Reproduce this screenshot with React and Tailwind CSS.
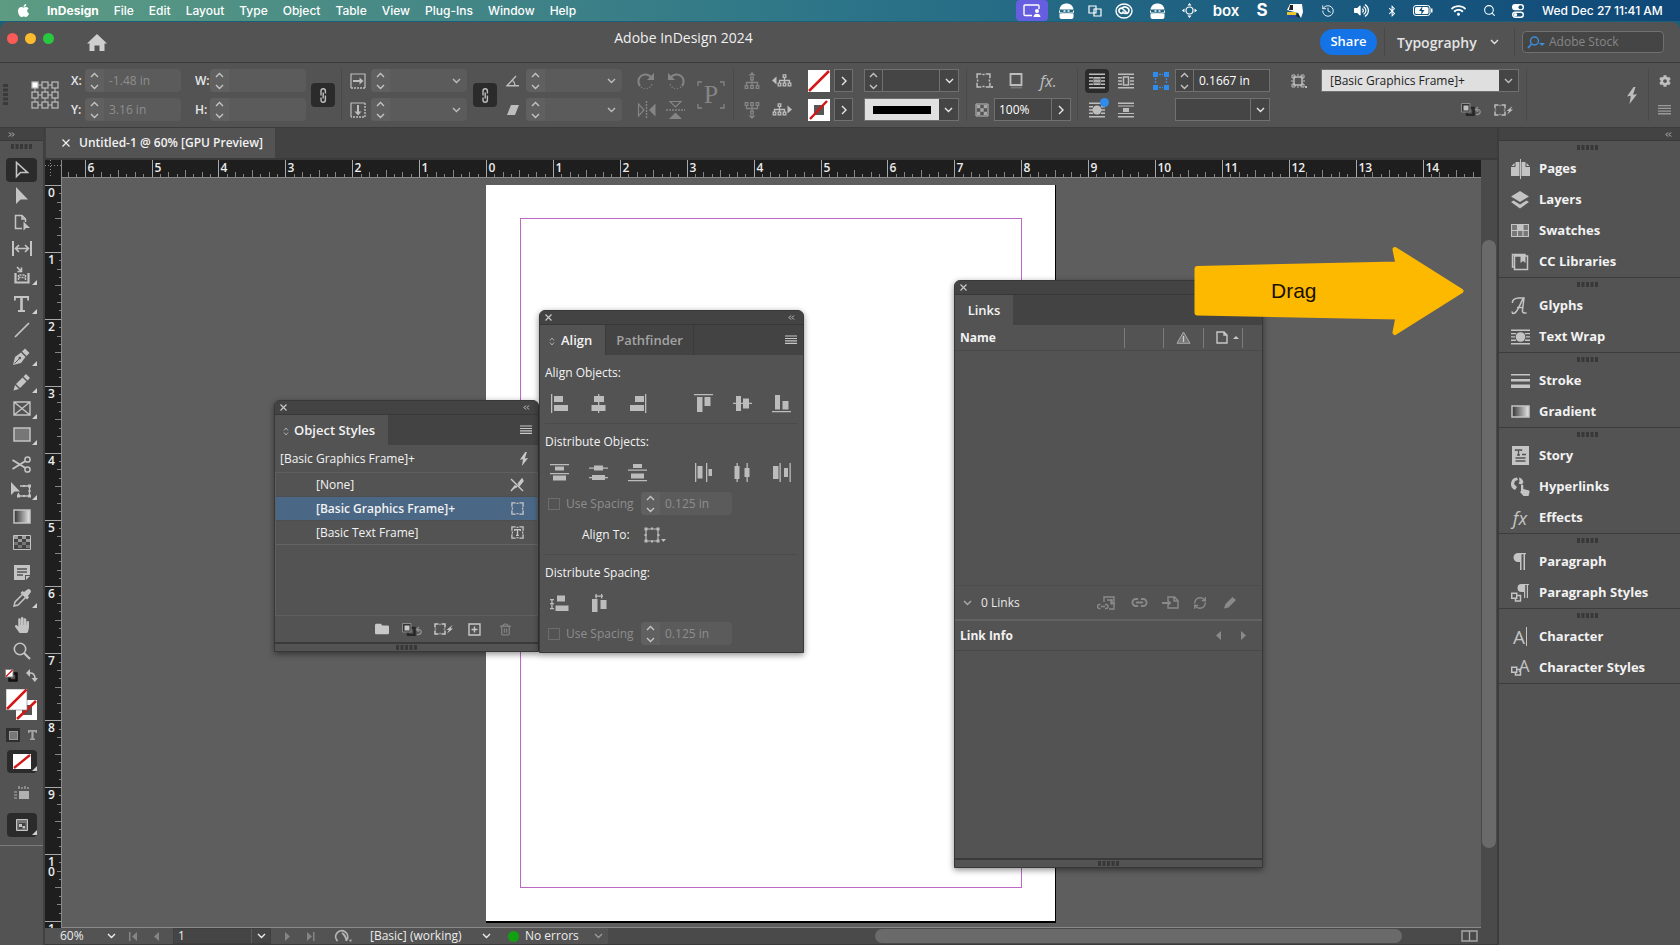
import React from "react";
import { FaApple, FaBluetoothB, FaWifi, FaFolder, FaCog, FaHandPaper, FaVolumeUp } from "react-icons/fa";
import { Search, Link2, RefreshCw, Trash2, History } from "lucide-react";

/* ---------- small drawing helpers ---------- */

function Svg({ w = 20, h = 20, box, className = "", children, stroke = false }) {
  return (
    <svg
      width={w}
      height={h}
      viewBox={box || `0 0 ${w} ${h}`}
      fill={stroke ? "none" : "currentColor"}
      stroke={stroke ? "currentColor" : "none"}
      strokeWidth={stroke ? 1.4 : 1}
      className={"shrink-0 " + className}
      aria-hidden="true"
    >
      {children}
    </svg>
  );
}

const Chevron = ({ className = "" }) => (
  <Svg w={9} h={6} stroke className={className}>
    <path d="M1 1l3.500 3.500L8 1" />
  </Svg>
);

const ChevronRight = () => (
  <Svg w={6} h={10} stroke>
    <path d="M1 1l4 4-4 4" />
  </Svg>
);

const Updown = () => (
  <Svg w={9} h={18} stroke className="text-[#c4c4c4]">
    <path d="M1 5l3.500-3.500L8 5M1 13l3.500 3.500L8 13" />
  </Svg>
);

const Hamburger = ({ className = "" }) => (
  <Svg w={13} h={10} className={className}>
    <path d="M0 0h13v1.300H0zM0 2.700h13v1.300H0zM0 5.400h13v1.300H0zM0 8.100h13v1.300H0z" />
  </Svg>
);

const Bolt = ({ w = 10, h = 17 }) => (
  <Svg w={w} h={h} box="0 0 10 17">
    <path d="M6.500 0L0 9.500l3.800-.8L2.500 17 10 7.200l-4 .6L8.500 0z" />
  </Svg>
);

const NoneSwatch = ({ hollow = false, size = 22 }) => (
  <Svg w={size} h={size} box="0 0 22 22">
    <rect width="22" height="22" fill="#fff" />
    {hollow && <rect x="6" y="6" width="10" height="10" fill="#555" />}
    {hollow ? (
      <path d="M2 20L19 2" stroke="#d01818" strokeWidth="2.500" />
    ) : (
      <path d="M1 21L21 1" stroke="#d01818" strokeWidth="2.500" />
    )}
  </Svg>
);

const Corner = () => (
  <svg width="5" height="5" viewBox="0 0 5 5" className="absolute right-0 bottom-0.5" aria-hidden="true">
    <path d="M5 0v5H0z" fill="#d0d0d0" />
  </svg>
);

const Grip = ({ className = "" }) => (
  <Svg w={21} h={5} className={"text-[#383838] " + className}>
    <path d="M0 0h3v5H0zM4.500 0h3v5h-3zM9 0h3v5H9zM13.500 0h3v5h-3zM18 0h3v5h-3z" />
  </Svg>
);

const DashedFrame = ({ w = 15, text = false }) => (
  <Svg w={w} h={w} box="0 0 14 14" stroke>
    <path d="M1 5V1h4M9 1h4v4M13 9v4H9M5 13H1V9M6 1.500h2M6 12.500h2M1.500 6v2M12.500 6v2" />
    {text && <path d="M4 5.500V4h6v1.500M7 4v6M5.500 10h3" />}
  </Svg>
);

const ClearOverrides = () => (
  <Svg w={21} h={13}>
    <path d="M9 5h3.500v7H6V9.500" fill="none" stroke="#262626" strokeWidth="2.500" />
    <path d="M0.500 0.500h8.500v8.500h-8.500z" fill="#333" stroke="#8a8a8a" />
    <rect x="2.500" y="2.500" width="5" height="5" />
    <path d="M15 11.500c5 .5 6-5 1-5h-1M17 4l-2.500 2.500L17 9" fill="none" stroke="#8f8f8f" strokeWidth="1.300" />
  </Svg>
);

const FrameBolt = () => (
  <Svg w={20} h={12}>
    <path d="M1 4.500V1h3.500M7.500 1H11v3.500M11 7.500V11H7.500M4.500 11H1V7.500M5.500 1.500h1M5.500 10.500h1M1.500 5.500v1M10.500 5.500v1" fill="none" stroke="currentColor" strokeWidth="1.500" />
    <path d="M18.500 2l-6 5h2.500l-2 3.500 6-5h-2.500z" />
  </Svg>
);

const ChainIcon = () => (
  <Svg w={8} h={17} stroke>
    <path d="M2 8.500V4a2.200 2.200 0 0 1 4.400 0v2.500M6.400 8.500V13A2.200 2.200 0 0 1 2 13v-2.500M4.200 5.500v6" />
  </Svg>
);

const Btn = ({ label, className = "", children }) => (
  <button type="button" aria-label={label} className={"flex shrink-0 items-center justify-center " + className}>
    {children}
  </button>
);

/* ---------- menu bar ---------- */

const MENUS = ["File", "Edit", "Layout", "Type", "Object", "Table", "View", "Plug-Ins", "Window", "Help"];

const Ghost = () => (
  <Svg w={15} h={16}>
    <path d="M0.500 6.500C1 2.500 4 0.500 7.500 0.500s6.500 2 7 6z" />
    <path d="M0.500 10.500h14v3.500a2 2 0 0 1-2 2h-10a2 2 0 0 1-2-2z" />
    <path d="M0.500 7.500v2c2 1 12 1 14 0v-2" fill="none" stroke="currentColor" />
    <path d="M4.500 8h2M8.500 8h2" stroke="currentColor" strokeWidth="1.500" />
  </Svg>
);

function StatusIcons() {
  const cell = "flex shrink-0 items-center justify-center ";
  return (
    <div className="flex items-center self-stretch">
      <Btn label="Screen sharing" className="h-full w-8 rounded bg-[#665ee0]">
        <Svg w={18} h={13} stroke>
          <path d="M9 11.500H2a1 1 0 0 1-1-1V2a1 1 0 0 1 1-1h13a1 1 0 0 1 1 1v3" />
          <circle cx="14" cy="7" r="2" fill="currentColor" stroke="none" />
          <path d="M10.500 13c0-4.500 7-4.500 7 0z" fill="currentColor" stroke="none" />
        </Svg>
      </Btn>
      <span className={cell + "w-9"}><Ghost /></span>
      <span className={cell + "w-[22px]"}>
        <Svg w={14} h={12} stroke><path d="M1 1h7v7H1zM6 4h7v7H6z" strokeWidth="1.200" /></Svg>
      </span>
      <span className={cell + "w-9"}>
        <Svg w={18} h={16} stroke>
          <ellipse cx="9" cy="8" rx="8" ry="7" />
          <path d="M11.500 9.500L8 6C5.500 3.800 2.800 6.800 4.500 9.200c1.200 1.600 3 1.300 4 .3M6.500 5.500c3-3.500 9-.5 7 3.500-1.500 2.500-4 1.500-5 .5L7.500 8.500" strokeWidth="1.600" />
        </Svg>
      </span>
      <span className={cell + "w-[30px]"}><Ghost /></span>
      <span className={cell + "w-[34px]"}>
        <Svg w={15} h={15}>
          <circle cx="7.500" cy="7.500" r="3.500" fill="none" stroke="currentColor" strokeWidth="1.200" />
          <path d="M7.500 0l2 2.500h-4zM7.500 15l2-2.500h-4zM0 7.500l2.500-2v4zM15 7.500l-2.500-2v4z" />
        </Svg>
      </span>
      <span className={cell + "w-10 text-[15px] leading-none font-semibold"}>box</span>
      <span className={cell + "w-8 text-[17px] leading-none font-bold"}>S</span>
      <span className={cell + "w-[34px]"}>
        <Svg w={16} h={14}>
          <path d="M0 6l3-6h12l1 8-2 6-3-5z" />
          <path d="M3 1h3v5H2z" fill="#222" />
          <path d="M11 9l2 5-4-2z" fill="#222" />
          <path d="M0 8h9v3H0z" fill="#e8c62c" />
          <path d="M1 11h8v3H1z" fill="#274a9a" />
        </Svg>
      </span>
      <span className={cell + "w-8"}><History size={14} strokeWidth={1.5} /></span>
      <span className={cell + "w-[34px]"}><FaVolumeUp size={15} /></span>
      <span className={cell + "w-7"}><FaBluetoothB size={12} /></span>
      <span className={cell + "w-[34px]"}>
        <Svg w={20} h={11}>
          <rect x="0.500" y="0.500" width="16.500" height="10" rx="2.500" fill="none" stroke="currentColor" />
          <rect x="2" y="2" width="13.500" height="7" rx="1.500" />
          <path d="M18 3.500h1.500v4H18z" />
          <path d="M9.500 1L6 6h2.500L8 10l3.500-5H9z" fill="#14507a" />
        </Svg>
      </span>
      <span className={cell + "w-9"}><FaWifi size={15} /></span>
      <span className={cell + "w-[26px]"}><Search size={13} strokeWidth={2} /></span>
      <span className={cell + "w-8"}>
        <Svg w={12} h={14}>
          <rect y="0" width="12" height="6.300" rx="3" />
          <rect x="0.700" y="8.300" width="10.600" height="5" rx="2.500" fill="none" stroke="currentColor" strokeWidth="1.400" />
          <circle cx="8.500" cy="3.150" r="2" fill="#14507a" />
          <circle cx="3.500" cy="10.800" r="1.700" />
        </Svg>
      </span>
      <span className="ml-2 w-[72px] whitespace-nowrap">Wed Dec 27</span>
      <span className="w-[66px] whitespace-nowrap">11:41 AM</span>
    </div>
  );
}

function MenuBar() {
  return (
    <header className="mb-px flex h-[21px] shrink-0 items-center justify-between bg-linear-to-r from-[#5d9c82] via-[#2c7488] to-[#0f4878] pl-4 font-['Inter',sans-serif] text-[12px] font-medium text-white">
      <nav className="flex items-center gap-[15px]">
        <a href="#apple" aria-label="Apple" className="w-4"><FaApple size={15} /></a>
        <a href="#app" className="font-bold">InDesign</a>
        {MENUS.map((m) => (
          <a key={m} href={"#" + m.toLowerCase()}>{m}</a>
        ))}
      </nav>
      <StatusIcons />
    </header>
  );
}

/* ---------- title bar ---------- */

function TitleBar() {
  return (
    <div className="relative flex h-[41px] shrink-0 items-center justify-between rounded-t-lg border-b border-[#3c3c3c] bg-[#535353] pr-4 pl-[7px]">
      <div className="flex items-center">
        <div className="mb-2 flex gap-[7px]">
          <Btn label="Close window" className="size-[11px] rounded-full bg-[#fc5b57]" />
          <Btn label="Minimize window" className="size-[11px] rounded-full bg-[#fdbb2e]" />
          <Btn label="Zoom window" className="size-[11px] rounded-full bg-[#28c840]" />
        </div>
        <Btn label="Home" className="ml-[33px] text-[#cfcfcf]">
          <Svg w={20} h={17}>
            <path d="M10 0L0 9.500h2.500V17h5v-5.500h5V17h5V9.500H20z" />
          </Svg>
        </Btn>
      </div>
      <h1 className="absolute inset-x-0 top-2 mx-auto w-fit pr-[313px] text-[14px] leading-4 text-[#f0f0f0]">Adobe InDesign 2024</h1>
      <div className="relative flex items-center">
        <button type="button" className="h-[26px] w-[57px] rounded-full bg-[#1473e6] text-[13px] font-semibold text-white">Share</button>
        <div className="ml-[7px] h-7 w-px bg-[#484848]" />
        <button type="button" className="ml-3 flex w-[102px] items-center justify-between text-[14px] font-semibold text-[#e4e4e4]">
          Typography <Chevron />
        </button>
        <div className="ml-[15px] h-7 w-px bg-[#484848]" />
        <label className="ml-[7px] flex h-[22px] w-[142px] items-center rounded-sm border border-[#707070] bg-[#454545] pl-1">
          <Svg w={18} h={13} className="text-[#3b8fe0]">
            <circle cx="7.500" cy="5" r="4" fill="none" stroke="currentColor" strokeWidth="1.400" />
            <path d="M4.500 8L1 12" stroke="currentColor" strokeWidth="1.600" />
            <path d="M12 7h6l-3 3z" />
          </Svg>
          <input aria-label="Adobe Stock" placeholder="Adobe Stock" className="ml-1 w-[100px] bg-transparent text-[12px] text-white outline-none placeholder:text-[#858585]" />
        </label>
      </div>
    </div>
  );
}

/* ---------- control bar ---------- */

const Sep = ({ className = "" }) => <div className={"h-[52px] w-px shrink-0 bg-[#494949] " + className} />;
const Pair = ({ className = "", children }) => <div className={"flex shrink-0 flex-col gap-[6px] " + className}>{children}</div>;

function SoftField({ label, value = "", width, drop = false }) {
  return (
    <div className={"flex h-[23px] items-center rounded-sm bg-[#5b5b5b] " + width}>
      <Btn label={label + " stepper"} className="h-full w-[19px] rounded-l-sm bg-[#606060]"><Updown /></Btn>
      <input aria-label={label} defaultValue={value} className="min-w-0 flex-1 bg-transparent pl-[5px] text-[12px] text-[#8e8e8e] outline-none" />
      {drop && <Btn label={label + " options"} className="w-[22px] text-[#bdbdbd]"><Chevron /></Btn>}
    </div>
  );
}

const edge = "h-[23px] border border-[#707070] bg-[#454545] text-[#e6e6e6] ";
const box = edge + "flex items-stretch ";

const Row = ({ className = "", children }) => <div className={"flex h-[23px] items-center " + className}>{children}</div>;

const WrapLines = ({ children, w = 16 }) => (
  <Svg w={w} h={16} box="0 0 16 16">
    <path d="M0 0.500h16v1.500H0zM0 4h4v1.400H0zM12 4h4v1.400h-4zM0 7.300h4v1.400H0zM12 7.300h4v1.400h-4zM0 10.600h4V12H0zM12 10.600h4V12h-4zM0 14h16v1.500H0z" />
    {children}
  </Svg>
);

const Tree = ({ dir }) => (
  <Svg w={16} h={18}>
    <g transform={dir === "down" ? "matrix(1 0 0 -1 0 18)" : undefined}>
      <path d="M8 0l3.500 3.500h-7z" />
      <path d="M8 8v5M2.500 13v-2.500h11V13" fill="none" stroke="currentColor" strokeWidth="1.300" />
      <path d="M6.700 5.200h2.600v2.600H6.700zM1.200 13.700h2.600v2.600H1.200zM6.700 13.700h2.600v2.600H6.700zM12.200 13.700h2.600v2.600h-2.600z" fill="none" stroke="currentColor" strokeWidth="1.300" />
    </g>
  </Svg>
);

const SideTree = ({ dir }) => (
  <Svg w={20} h={13}>
    <g transform={dir === "right" ? "matrix(-1 0 0 1 20 0)" : undefined}>
      <path d="M0 6.500L4.500 2.500v8z" />
      <path d="M12.500 4v5M7.500 9V6.500h10V9" fill="none" stroke="currentColor" strokeWidth="1.300" />
      <path d="M11.200 0.800h2.600v2.600h-2.600zM6.200 9.200h2.600v2.600H6.200zM11.200 9.200h2.600v2.600h-2.600zM16.200 9.200h2.600v2.600h-2.600z" fill="none" stroke="currentColor" strokeWidth="1.300" />
    </g>
  </Svg>
);

function ControlBar() {
  return (
    <div className="flex h-[65px] shrink-0 items-center border-b border-[#3c3c3c] bg-[#535353] text-[12px] text-[#bdbdbd]">
      <Svg w={5} h={22} className="ml-[3px] text-[#3a3a3a]">
        <path d="M0 0h5v3H0zM0 4.500h5v3H0zM0 9h5v3H0zM0 13.500h5v3H0zM0 18h5v3H0z" />
      </Svg>
      <Btn label="Reference point" className="ml-[23px]">
        <Svg w={28} h={28} stroke>
          <path d="M4 4h20v20H4zM14 4v20M4 14h20" strokeWidth="1" />
          {[1, 11, 21].map((y) => [1, 11, 21].map((x) => (
            <rect key={x + "-" + y} x={x} y={y} width="6" height="6" fill={x + y === 2 ? "#fff" : "#535353"} strokeWidth="1.200" />
          )))}
        </Svg>
      </Btn>
      <Pair className="ml-[12px] w-[112px]">
        <Row><span className="w-[14px] font-semibold text-[#e8e8e8]">X:</span><SoftField label="X" value="-1.48 in" width="w-[96px]" /></Row>
        <Row><span className="w-[14px] font-semibold text-[#e8e8e8]">Y:</span><SoftField label="Y" value="3.16 in" width="w-[96px]" /></Row>
      </Pair>
      <Pair className="ml-[12px] w-[111px]">
        <Row><span className="w-[15px] font-semibold text-[#e8e8e8]">W:</span><SoftField label="W" width="w-[96px]" /></Row>
        <Row><span className="w-[15px] font-semibold text-[#e8e8e8]">H:</span><SoftField label="H" width="w-[96px]" /></Row>
      </Pair>
      <Btn label="Constrain size" className="ml-[5px] h-6 w-[24px] rounded-sm bg-[#2b2b2b]"><ChainIcon /></Btn>
      <Sep className="ml-[6px]" />
      <Pair className="ml-[8px]">
        <Row className="w-[21px]">
          <Svg w={16} h={16} stroke><path d="M1 15V1h14v14" strokeWidth="1.200" /><path d="M1 15h14" strokeDasharray="2 1" /><path d="M3 8h8" strokeWidth="2" /><path d="M9.500 4.500L13.500 8l-4 3.500z" fill="currentColor" stroke="none" /></Svg>
        </Row>
        <Row className="w-[21px]">
          <Svg w={16} h={16} stroke><path d="M1 15V1h14" strokeWidth="1.200" /><path d="M15 1v14H1" strokeDasharray="2 1" /><path d="M8 3v8" strokeWidth="2" /><path d="M4.500 9.500L8 13.500l3.500-4z" fill="currentColor" stroke="none" /></Svg>
        </Row>
      </Pair>
      <Pair>
        <SoftField label="Scale X" width="w-[96px]" drop />
        <SoftField label="Scale Y" width="w-[96px]" drop />
      </Pair>
      <Btn label="Constrain scale" className="ml-[6px] h-6 w-[24px] rounded-sm bg-[#2b2b2b]"><ChainIcon /></Btn>
      <Pair className="ml-[9px]">
        <Row className="w-[20px]"><Svg w={14} h={12} stroke><path d="M13 10.800H1L10 1M6.500 5.500c1.500 1 2.500 3 2.500 5" /></Svg></Row>
        <Row className="w-[20px]"><Svg w={14} h={12}><path d="M5 1h8L9 11H1z" /></Svg></Row>
      </Pair>
      <Pair>
        <SoftField label="Rotation" width="w-[96px]" drop />
        <SoftField label="Shear" width="w-[96px]" drop />
      </Pair>
      <Pair className="ml-[15px] text-[#858585]">
        <Row className="gap-[10px]">
          <Btn label="Rotate clockwise">
            <Svg w={19} h={18} stroke><path d="M3 14A7 7 0 1 1 14 5" strokeWidth="2" /><path d="M17 1v7h-7z" fill="currentColor" stroke="none" /><path d="M4 15c4 3 9 2 11-3" strokeDasharray="1 2" /></Svg>
          </Btn>
          <Btn label="Rotate counterclockwise">
            <Svg w={19} h={18} stroke><path d="M16 14A7 7 0 1 0 5 5" strokeWidth="2" /><path d="M2 1v7h7z" fill="currentColor" stroke="none" /><path d="M15 15c-4 3-9 2-11-3" strokeDasharray="1 2" /></Svg>
          </Btn>
        </Row>
        <Row className="gap-[10px]">
          <Btn label="Flip horizontal">
            <Svg w={19} h={18} stroke><path d="M1.500 3v12L7 9z" strokeWidth="1.200" /><path d="M9.500 0v18" strokeDasharray="2 1" /><path d="M18.500 2.500v13L12 9z" fill="currentColor" stroke="none" /></Svg>
          </Btn>
          <Btn label="Flip vertical">
            <Svg w={19} h={20} stroke><path d="M4 1.500h11L9.500 7z" strokeWidth="1.200" /><path d="M0 10h19" strokeDasharray="2 1" /><path d="M3 19h13l-6.500-6.500z" fill="currentColor" stroke="none" /></Svg>
          </Btn>
        </Row>
      </Pair>
      <div className="relative ml-[12px] flex size-7 shrink-0 items-center justify-center font-['Liberation_Serif',serif] text-[26px] leading-none text-[#858585]">
        <svg className="absolute inset-0" width="28" height="28" fill="none" stroke="#858585" strokeWidth="1.300" aria-hidden="true"><path d="M1 5V1h4M23 1h4v4M27 23v4h-4M5 27H1v-4" /></svg>
        P
      </div>
      <Sep className="ml-[8px]" />
      <Pair className="ml-[10px]">
        <Row className="gap-[12px]"><span className="text-[#858585]"><Tree /></span><SideTree /></Row>
        <Row className="gap-[12px]"><span className="text-[#858585]"><Tree dir="down" /></span><SideTree dir="right" /></Row>
      </Pair>
      <Pair className="ml-[16px]">
        <Row className="gap-[4px]"><Btn label="Fill"><NoneSwatch /></Btn><Btn label="Fill options" className={edge + "w-[19px]"}><ChevronRight /></Btn></Row>
        <Row className="gap-[4px]"><Btn label="Stroke"><NoneSwatch hollow /></Btn><Btn label="Stroke options" className={edge + "w-[19px]"}><ChevronRight /></Btn></Row>
      </Pair>
      <Pair className="ml-[11px]">
        <div className={box + "w-[95px]"}>
          <Btn label="Weight stepper" className="w-[18px] border-r border-[#707070]"><Updown /></Btn>
          <input aria-label="Stroke weight" className="min-w-0 flex-1 bg-transparent px-1 outline-none" />
          <Btn label="Stroke weight options" className="w-[19px] border-l border-[#707070]"><Chevron /></Btn>
        </div>
        <div className={box + "w-[95px]"}>
          <Btn label="Stroke type" className="flex-1 bg-[#e0e0e0]"><span className="h-2 w-[58px] bg-black" /></Btn>
          <Btn label="Stroke type options" className="w-[19px]"><Chevron /></Btn>
        </div>
      </Pair>
      <Sep className="ml-[7px]" />
      <Pair className="ml-[8px]">
        <Row>
          <Btn label="Corner options" className="w-[19px]"><DashedFrame w={15} /><span className="mt-3 size-[2px] bg-current" /></Btn>
          <Btn label="Drop shadow" className="ml-[14px] w-[16px]"><Svg w={14} h={16} stroke><path d="M1.500 1h11v11h-11z" strokeWidth="1.800" /><path d="M2 14.500h11" stroke="#777" strokeWidth="2" /></Svg></Btn>
          <Btn label="Effects" className="ml-[16px] text-[16px] leading-4 italic">fx.</Btn>
        </Row>
        <Row>
          <Svg w={14} h={14} className="mr-[5px]"><path d="M1 1h12v12H1z" fill="none" stroke="currentColor" /><path d="M2 2h3.300v3.300H2zM8.700 2H12v3.300H8.700zM5.300 5.300h3.400v3.400H5.300zM2 8.700h3.300V12H2zM8.700 8.700H12V12H8.700z" opacity=".8" /></Svg>
          <div className={box + "w-[77px]"}>
            <input aria-label="Opacity" defaultValue="100%" className="min-w-0 flex-1 bg-transparent pl-[4px] text-white outline-none" />
            <Btn label="Opacity slider" className="w-[19px] border-l border-[#707070]"><ChevronRight /></Btn>
          </div>
        </Row>
      </Pair>
      <Sep className="ml-[6px]" />
      <Pair className="ml-[7px]">
        <Row className="gap-[9px]">
          <Btn label="No text wrap" className="h-[24px] w-[24px] rounded-sm bg-[#2b2b2b]"><WrapLines><path d="M5 4h6v1.400H5zM5 7.300h6v1.400H5zM5 10.600h6V12H5z" /><path d="M4 4h8v8H4z" opacity=".5" /></WrapLines></Btn>
          <Btn label="Wrap around bounding box"><WrapLines><path d="M5.500 4h5v8h-5z" fill="none" stroke="currentColor" strokeWidth="1.500" /></WrapLines></Btn>
        </Row>
        <Row className="gap-[9px]">
          <Btn label="Wrap around shape" className="relative h-[24px] w-[24px]"><WrapLines><circle cx="8" cy="8" r="4.500" /></WrapLines><span className="absolute top-0 right-0 size-[9px] rounded-full bg-[#2f8ceb]" /></Btn>
          <Btn label="Jump object"><Svg w={16} h={16}><path d="M0 0.500h16V2H0zM0 3.500h16V4.500H0zM5 6h6v4H5zM0 11h16v1H0zM0 14h16v1.500H0z" /></Svg></Btn>
        </Row>
      </Pair>
      <Pair className="ml-[19px]">
        <Row>
          <Svg w={16} h={18} className="mr-[6px] text-[#2f8ceb]"><path d="M0 0h5v5H0zM11 0h5v5h-5zM0 13h5v5H0zM11 13h5v5h-5z" /><path d="M2.500 6v6M13.500 6v6M6 2.500h4M6 15.500h4" stroke="currentColor" strokeDasharray="2 1" strokeWidth="1.300" /></Svg>
          <div className={box + "w-[95px]"}>
            <Btn label="Offset stepper" className="w-[18px] border-r border-[#707070]"><Updown /></Btn>
            <input aria-label="Wrap offset" defaultValue="0.1667 in" className="min-w-0 flex-1 bg-transparent pl-[5px] text-white outline-none" />
          </div>
        </Row>
        <Row className="pl-[22px]">
          <div className={box + "w-[95px]"}>
            <input aria-label="Wrap to" className="min-w-0 flex-1 bg-transparent outline-none" />
            <Btn label="Wrap to options" className="w-[19px] border-l border-[#707070]"><Chevron /></Btn>
          </div>
        </Row>
      </Pair>
      <Pair className="ml-[20px]">
        <Row>
          <Btn label="Frame fitting" className="w-[18px]"><Svg w={14} h={14} stroke><path d="M3 3h8v8H3z" strokeWidth="1.500" /><path d="M1 1h3v3H1zM10 1h3v3h-3zM1 10h3v3H1zM10 10h3v3h-3zM6 1h2M6 13h2M1 6v2M13 6v2" strokeWidth="1" /></Svg><span className="mt-3 size-[2px] bg-current" /></Btn>
          <div className="ml-[13px] flex h-[23px] w-[198px] items-stretch border border-[#707070] bg-[#454545]">
            <input aria-label="Object style" defaultValue="[Basic Graphics Frame]+" className="min-w-0 flex-1 bg-[#dfdfdf] pl-2 text-[12px] text-[#222] outline-none" />
            <Btn label="Object style options" className="w-[19px]"><Chevron /></Btn>
          </div>
        </Row>
        <Row className="justify-end gap-[12px] pr-[5px]">
          <Btn label="Clear overrides"><ClearOverrides /></Btn>
          <Btn label="Clear attributes"><FrameBolt /></Btn>
        </Row>
      </Pair>
      <Sep className="ml-[7px]" />
      <div className="flex-1" />
      <Btn label="Quick apply" className="mr-[11px]"><Bolt /></Btn>
      <Sep className="mr-[9px]" />
      <Pair className="mr-[9px] items-center">
        <Row><Btn label="Settings"><FaCog size={12} /></Btn></Row>
        <Row><Btn label="Control menu"><Hamburger className="text-[#9a9a9a]" /></Btn></Row>
      </Pair>
    </div>
  );
}

/* ---------- toolbox ---------- */

function GradientIcon({ w, h, id }) {
  return (
    <Svg w={w} h={h}>
      <defs>
        <linearGradient id={id}><stop offset="0" stopColor="#333" /><stop offset="1" stopColor="#e8e8e8" /></linearGradient>
      </defs>
      <rect x="1" y="1" width={w - 2} height={h - 2} fill={`url(#${id})`} stroke="currentColor" strokeWidth="1.500" />
    </Svg>
  );
}

const TOOLS = [
  {
    cls: "h-[129px]",
    items: [
      { n: "Selection", on: true, d: <Svg w={14} h={18} stroke><path d="M1.500 1.500v14l4-4h7z" strokeWidth="1.600" /></Svg> },
      { n: "Direct Selection", d: <Svg w={14} h={18}><path d="M1 0v17l4.500-4.500H13z" /></Svg> },
      { n: "Page", d: <Svg w={16} h={17} stroke><path d="M8 14.500H1.500v-13H8L11.500 5v3M8 1.500V5h3.500" strokeWidth="1.500" /><path d="M9.500 7.500v9l2.500-2.500h4z" fill="currentColor" stroke="none" /></Svg> },
      { n: "Gap", d: <Svg w={20} h={15} stroke><path d="M1 0v15M19 0v15" strokeWidth="2" /><path d="M4 7.500h12M7 4L3.500 7.500 7 11M13 4l3.500 3.500L13 11" strokeWidth="1.600" /></Svg> },
      { n: "Content Collector", fly: true, d: <Svg w={16} h={18} stroke><path d="M1.500 7v9.500h13V7" strokeWidth="2.200" /><path d="M4.500 14V9h7v5M4.500 11.500h7" strokeDasharray="2 1" /><path d="M3 1l4 4M7.500 1.500v4h-4" strokeWidth="1.600" /></Svg> },
    ],
  },
  {
    cls: "h-[155px] mt-[5px]",
    items: [
      { n: "Type", fly: true, d: <Svg w={15} h={16}><path d="M0 0h15v4.500h-1.800V2H8.800v12H11v2H4v-2h2.200V2H1.800v2.500H0z" /></Svg> },
      { n: "Line", d: <Svg w={16} h={16} stroke><path d="M1 15L15 1" strokeWidth="1.700" /></Svg> },
      { n: "Pen", fly: true, d: <Svg w={17} h={17}><path d="M0 17l2-8 6-4.500 4.500 4.500-4.500 6z" /><path d="M9 3.500L12 0.500 16.500 5 13.500 8z" /><path d="M1.500 15.500l5-5" stroke="#535353" /><circle cx="6.800" cy="10" r="1.300" fill="#535353" /></Svg> },
      { n: "Pencil", fly: true, d: <Svg w={17} h={17}><path d="M0.500 16.500L2 11l4 4zM3 10l6.500-6.500 4 4L7 14z" /><path d="M10.500 2.500L13 0l4 4-2.500 2.500z" /></Svg> },
      { n: "Rectangle Frame", fly: true, d: <Svg w={18} h={15} stroke><path d="M1 1h16v13H1zM1 1l16 13M17 1L1 14" /></Svg> },
      { n: "Rectangle", fly: true, d: <Svg w={18} h={15}><path d="M1 1h16v13H1z" fill="#777" stroke="currentColor" strokeWidth="1.500" /></Svg> },
    ],
  },
  {
    cls: "h-[103px] mt-[5px]",
    items: [
      { n: "Scissors", d: <Svg w={19} h={17} stroke><path d="M0.500 4L13.500 12M0.500 13L13.500 5" strokeWidth="2" /><circle cx="15.500" cy="3.500" r="2.600" strokeWidth="1.500" /><circle cx="15.500" cy="13.500" r="2.600" strokeWidth="1.500" /></Svg> },
      { n: "Free Transform", fly: true, d: <Svg w={21} h={17}><path d="M0 0v13l3.500-3.500H9z" /><path d="M9 4h9.500v10h-11v-3" fill="none" stroke="currentColor" strokeWidth="1.300" /><path d="M17 2.500h3v3h-3zM17 12.500h3v3h-3zM6 12.500h3v3H6zM12 3h2v2h-2zM12 13h2v2h-2zM17.500 8h2v2h-2z" /></Svg> },
      { n: "Gradient Swatch", d: <GradientIcon w={18} h={15} id="gs" /> },
      { n: "Gradient Feather", d: <Svg w={18} h={15}><path d="M0.500 0.500h17v14h-17z" fill="#444" stroke="currentColor" /><path d="M1 1h4v3H1zM9 1h4v3H9zM5 4h4v3H5zM13 4h4v3h-4z" opacity=".7" /><path d="M1 7h4v3H1zM9 7h4v3H9zM5 10h4v3H5zM13 10h4v3h-4z" opacity=".4" /></Svg> },
    ],
  },
  {
    cls: "h-[103px] mt-[5px]",
    items: [
      { n: "Note", d: <Svg w={16} h={15}><path d="M0 0h16v10h-5v5H0zM12 11h4l-4 4z" /><path d="M3 4h10M3 7h10M3 10h6" stroke="#535353" strokeWidth="1.300" /></Svg> },
      { n: "Eyedropper", fly: true, d: <Svg w={18} h={18} stroke><path d="M9.500 5.500L2 13l-1 4 4-1 7.500-7.500" strokeWidth="1.500" /><path d="M7.500 4l2-2 1.500 1L14 .8a2.200 2.200 0 0 1 3.200 3.200L15 7l1 1.500-2 2z" fill="currentColor" stroke="none" /></Svg> },
      { n: "Hand", d: <FaHandPaper size={16} /> },
      { n: "Zoom", d: <Svg w={18} h={18} stroke><circle cx="7" cy="7" r="5.700" strokeWidth="1.600" /><path d="M11 11l6 6" strokeWidth="2.200" /></Svg> },
    ],
  },
];

function Toolbox() {
  return (
    <aside className="flex w-[45px] shrink-0 flex-col border-r-2 border-[#404040] bg-[#535353] text-[#c4c4c4]">
      <div className="flex h-[13px] shrink-0 items-center border-b border-[#3a3a3a] bg-[#434343] pl-2">
        <Svg w={7} h={5} stroke><path d="M1 0.500l2 2-2 2M4 0.500l2 2-2 2" strokeWidth="1" /></Svg>
      </div>
      <Grip className="mx-auto mt-[3px] mb-[9px]" />
      {TOOLS.map((g, i) => (
        <div key={i} className={"flex shrink-0 flex-col items-center justify-between " + g.cls}>
          {g.items.map((t) => (
            <button key={t.n} type="button" aria-label={t.n} className={"relative flex h-[24px] w-[31px] items-center justify-center rounded-sm " + (t.on ? "bg-[#2b2b2b]" : "")}>
              {t.d}
              {t.fly && <Corner />}
            </button>
          ))}
        </div>
      ))}
      <div className="mt-[6px] flex items-center justify-center gap-[8px]">
        <Btn label="Default fill and stroke"><Svg w={13} h={13}><path d="M4.500 4.500h7v7h-7z" fill="none" stroke="#111" strokeWidth="2.500" /><path d="M0.500 0.500h7.500v7.500H0.500z" fill="#fff" stroke="#888" /><path d="M1 7.500l6.500-6.500" stroke="#d01818" strokeWidth="1.300" /></Svg></Btn>
        <Btn label="Swap fill and stroke"><Svg w={12} h={13}><path d="M3 4c4-.5 6 1.500 6 6" fill="none" stroke="currentColor" strokeWidth="1.500" /><path d="M4 0v8L0 4zM5.500 9H12l-3.200 4z" /></Svg></Btn>
      </div>
      <Btn label="Fill and stroke" className="mt-[7px]">
        <Svg w={31} h={31}>
          <path d="M10 11h21v20H10z" fill="#fff" />
          <path d="M16 16h10v10H16z" fill="#555" />
          <path d="M11 30L30 12" stroke="#d01818" strokeWidth="2.500" />
          <path d="M0 0h21v21H0z" fill="#fff" stroke="#777" strokeWidth=".6" />
          <path d="M1 20L20.500 0.500" stroke="#d01818" strokeWidth="2.500" />
        </Svg>
      </Btn>
      <div className="mt-[8px] flex items-center justify-center gap-[8px]">
        <Btn label="Formatting affects container" className="size-[14px] bg-[#2f2f2f]"><span className="size-[9px] border border-[#999] bg-[#777]" /></Btn>
        <Btn label="Formatting affects text"><Svg w={9} h={10} className="text-[#a4a4a4]"><path d="M0 0h9v3H7.500V1.700H5.600v6.800H7V10H2V8.500h1.400V1.700H1.500V3H0z" /></Svg></Btn>
      </div>
      <button type="button" aria-label="Apply none" className="relative mx-auto mt-[8px] flex h-[23px] w-[30px] shrink-0 items-center justify-center rounded-sm bg-[#2b2b2b]">
        <Svg w={18} h={15}><path d="M0 0h18v15H0z" fill="#fff" /><path d="M1 14L17 1" stroke="#d01818" strokeWidth="2.300" /></Svg>
        <Corner />
      </button>
      <Btn label="View options" className="mt-[13px]">
        <Svg w={15} h={13} className="text-[#b0b0b0]"><path d="M5 5h10v8H5z" /><path d="M0 6h3M0 9h3M0 12h3M5 0v3M8 1v2M11 0v3M14 1v2" stroke="currentColor" strokeWidth="1.200" /></Svg>
      </Btn>
      <button type="button" aria-label="Screen mode" className="relative mx-auto mt-[14px] flex h-[24px] w-[30px] shrink-0 items-center justify-center rounded-sm bg-[#2b2b2b]">
        <Svg w={12} h={12}><path d="M0.500 0.500h11v11h-11z" fill="#777" stroke="currentColor" /><path d="M2.500 4h7v6h-7z" fill="#444" /><path d="M3 5h3v3H3zM6.500 7H9v2.500H6.500z" /></Svg>
        <Corner />
      </button>
      <div className="mt-[8px] h-px bg-[#7c7c7c]" />
    </aside>
  );
}

/* ---------- rulers ---------- */

const INCH = 66.9;
const range = (a, b) => Array.from({ length: b - a + 1 }, (_, i) => a + i);
const at = (origin, eighths) => Math.round(origin + (eighths * INCH) / 8) + 0.5;
const tickLen = (k) => (k % 4 === 0 ? 7 : k % 2 === 0 ? 5 : 3);

function TopRuler() {
  return (
    <svg width="100%" height="18" className="block min-w-0 flex-1 border-b border-[#8a8a8a] bg-[#1e1e1e]" role="img" aria-label="Horizontal ruler">
      {range(-56, 136).map((k) => (
        <line key={k} x1={at(424, k)} x2={at(424, k)} y1={k % 8 === 0 ? 0 : 17 - tickLen(k)} y2="17" stroke={k % 8 === 0 ? "#a8a8a8" : "#848484"} />
      ))}
      {range(-6, 14).map((n) => (
        <text key={n} x={at(424, n * 8) + 2} y="12" fill="#ececec" fontSize="12" fontWeight="600">{Math.abs(n)}</text>
      ))}
    </svg>
  );
}

function SideRuler() {
  return (
    <svg width="17" height="100%" className="block shrink-0 border-r border-[#8a8a8a] bg-[#1e1e1e]" role="img" aria-label="Vertical ruler">
      {range(-1, 96).map((k) => (
        <line key={k} y1={at(7, k)} y2={at(7, k)} x1={k % 8 === 0 ? 0 : 17 - tickLen(k)} x2="17" stroke={k % 8 === 0 ? "#a8a8a8" : "#848484"} />
      ))}
      {range(0, 11).map((n) =>
        String(n).split("").map((c, j) => (
          <text key={n + "-" + j} x="3" y={at(7, n * 8) + 11 + j * 10} fill="#ececec" fontSize="12" fontWeight="600">{c}</text>
        ))
      )}
    </svg>
  );
}

/* ---------- floating panels ---------- */

const panel = "absolute flex flex-col overflow-hidden rounded-t-md border border-[#383838] bg-[#535353] text-[#c8c8c8] shadow-[0_2px_6px_rgba(0,0,0,0.45)] ";
const tab = "flex h-full items-center bg-[#535353] pt-0.5 text-[13px] font-semibold whitespace-nowrap text-[#f2f2f2] ";

const Collapse = () => (
  <Svg w={7} h={5} stroke><path d="M3 0.500l-2 2 2 2M6 0.500l-2 2 2 2" strokeWidth="1" /></Svg>
);

const PanelStrip = ({ collapse = true }) => (
  <div className="flex h-[14px] shrink-0 items-center justify-between border-b border-[#383838] bg-[#434343] px-[5px]">
    <Btn label="Close panel"><Svg w={7} h={7} stroke><path d="M0.500 0.500l6 6M6.500 0.500l-6 6" strokeWidth="1.200" /></Svg></Btn>
    {collapse && <Btn label="Collapse panel" className="mr-[3px]"><Collapse /></Btn>}
  </div>
);

const Diamond = () => (
  <Svg w={6} h={9} stroke className="text-[#aaa]"><path d="M1 3.500L3 1l2 2.500M1 5.500L3 8l2-2.500" strokeWidth="1" /></Svg>
);

const PanelFoot = () => (
  <div className="flex h-[9px] shrink-0 items-center justify-center border-t-2 border-[#3a3a3a]"><Grip /></div>
);

function ObjectStyles() {
  const rows = [
    { t: "[None]", i: <Svg w={14} h={14} stroke><path d="M1 1l12 12" /><path d="M1 13l4-5 2 1M8 6l4-5 1 2-4 5" fill="currentColor" /></Svg> },
    { t: "[Basic Graphics Frame]+", i: <DashedFrame w={13} />, on: true },
    { t: "[Basic Text Frame]", i: <DashedFrame w={13} text /> },
  ];
  return (
    <section aria-label="Object Styles" className={panel + "top-[222px] left-[212px] w-[265px]"}>
      <PanelStrip />
      <div className="flex h-[30px] items-center justify-between bg-[#434343] pr-[6px]">
        <button type="button" className={tab + "w-[113px] gap-[5px] pl-2"}><Diamond />Object Styles</button>
        <Btn label="Panel menu"><Hamburger className="w-[12px]" /></Btn>
      </div>
      <div className="flex h-[28px] items-center justify-between border-b border-[#5f5f5f] pr-[9px] pl-[5px] text-[12px] text-[#f2f2f2]">
        [Basic Graphics Frame]+ <span className="text-[#c8c8c8]"><Bolt w={10} h={14} /></span>
      </div>
      <ul className="h-[143px] border-x border-b border-[#5f5f5f]">
        {rows.map((r) => (
          <li key={r.t} className="border-b border-[#4e4e4e] last:border-[#646464]">
            <button type="button" className={"flex h-[23px] w-full items-center justify-between pr-[13px] pl-[40px] text-[12px] text-[#f2f2f2] " + (r.on ? "bg-[#4a6785] font-semibold" : "")}>
              {r.t} <span className="text-[#c8c8c8]">{r.i}</span>
            </button>
          </li>
        ))}
      </ul>
      <div className="flex h-[26px] items-center justify-end pr-[17px]">
        <Btn label="New group" className="w-[31px]"><FaFolder size={14} /></Btn>
        <Btn label="Clear overrides" className="w-[31px]"><ClearOverrides /></Btn>
        <Btn label="Clear attributes" className="w-[31px]"><FrameBolt /></Btn>
        <Btn label="New style" className="w-[31px]"><Svg w={13} h={13} stroke><path d="M1 1h11v11H1zM6.500 3.500v6M3.500 6.500h6" /></Svg></Btn>
        <Btn label="Delete style" className="w-[31px] text-[#808080]"><Trash2 size={13} strokeWidth={2.4} /></Btn>
      </div>
      <PanelFoot />
    </section>
  );
}

const ALIGN = [
  ["Align left", "M0 0h1.300v19H0zM3 2h9v6H3zM3 11h14v6H3z"],
  ["Align center", "M8 0h1.300v19H8zM4 2h10v6H4zM1.500 11h14v6h-14z"],
  ["Align right", "M16 0h1.300v19H16zM6 2h9v6H6zM1 11h14v6H1z"],
  ["Align top", "M-1 0h19v1.300H-1zM2 3h5.500v15H2zM9.500 3h6v9h-6z"],
  ["Align middle", "M-1 8.800h19v1.300H-1zM2 2h5v15H2zM9 4.500h6v10H9z"],
  ["Align bottom", "M-1 17h19v1.300H-1zM2 1h5v14.500H2zM9.500 7h6v8.500h-6z"],
];
const DISTRIBUTE = [
  ["Distribute top", "M-1 1h19v1.300H-1zM4 3.500h9v4H4zM-1 10h19v1.300H-1zM2 12.500h13v5H2z"],
  ["Distribute vertical centers", "M-1 4.500h19v1.300H-1zM4 2.500h9v5H4zM-1 14h19v1.300H-1zM2 12h13v5H2z"],
  ["Distribute bottom", "M4 1h9v4H4zM-1 6.500h19v1.300H-1zM2 10.500h13v5H2zM-1 17h19v1.300H-1z"],
  ["Distribute left", "M0 0h1.300v19H0zM2.500 3h5v12.500h-5zM11 0h1.300v19H11zM13.500 6h3.500v7h-3.500z"],
  ["Distribute horizontal centers", "M2.500 0h1.300v19H2.500zM0.500 3h5v13h-5zM12.500 0h1.300v19h-1.300zM10.500 5h5v9h-5z"],
  ["Distribute right", "M6.500 0h1.300v19H6.500zM0 3h5.500v13H0zM16.500 0h1.300v19h-1.300zM11 5h4v9h-4z"],
];

const IconRow = ({ items }) => (
  <div className="flex h-[26px] items-center pl-[10px] text-[#bcbcbc]">
    {items.map(([n, d], i) => (
      <Btn key={n} label={n} className={"w-[20px] " + (i === 0 ? "" : i === 3 ? "ml-[46px]" : "ml-[19px]")}>
        <svg width="20" height="19" viewBox="-1 0 20 19" fill="currentColor" aria-hidden="true"><path d={d} /></svg>
      </Btn>
    ))}
  </div>
);

const UseSpacing = ({ id }) => (
  <div className="flex h-[23px] items-center pl-[8px] text-[12px] text-[#8e8e8e]">
    <input id={id} type="checkbox" className="size-[12px] appearance-none border border-[#6c6c6c]" />
    <label htmlFor={id} className="ml-[6px] w-[75px] whitespace-nowrap">Use Spacing</label>
    <SoftField label="Spacing" value="0.125 in" width="w-[91px]" />
  </div>
);

const Heading = ({ children }) => <h2 className="pl-[5px] text-[12px] leading-4 font-medium text-[#f2f2f2]">{children}</h2>;

function Align() {
  return (
    <section aria-label="Align" className={panel + "top-[132px] left-[477px] h-[343px] w-[265px]"}>
      <PanelStrip />
      <div className="flex h-[30px] shrink-0 items-center bg-[#434343] pr-[6px]">
        <button type="button" className={tab + "w-[65px] gap-[6px] pl-[9px]"}><Diamond />Align</button>
        <button type="button" className="h-full w-[89px] border-x border-[#3a3a3a] pt-0.5 text-[13px] font-semibold text-[#a4a4a4]">Pathfinder</button>
        <Btn label="Panel menu" className="ml-auto"><Hamburger className="w-[12px]" /></Btn>
      </div>
      <div className="flex flex-col pt-[10px]">
        <Heading>Align Objects:</Heading>
        <div className="h-[9px]" />
        <IconRow items={ALIGN} />
        <div className="mx-[5px] mt-[7px] mb-[10px] h-px bg-[#4b4b4b]" />
        <Heading>Distribute Objects:</Heading>
        <div className="h-[9px]" />
        <IconRow items={DISTRIBUTE} />
        <div className="h-[7px]" />
        <UseSpacing id="objectSpacing" />
        <div className="mt-[9px] flex h-[22px] items-center pl-[42px] text-[12px] font-medium text-[#f2f2f2]">
          Align To:
          <Btn label="Align to selection" className="ml-[14px] text-[#bcbcbc]">
            <Svg w={22} h={16}><path d="M2 2h12v12H2z" fill="none" stroke="currentColor" strokeWidth="1.200" /><path d="M0.500 0.500h3v3h-3zM12.500 0.500h3v3h-3zM0.500 12.500h3v3h-3zM12.500 12.500h3v3h-3zM7 0.500h2v2H7zM7 13.500h2v2H7zM0.500 7h2v2h-2zM13.500 7h2v2h-2z" /><path d="M17 12h5l-2.500 3z" /></Svg>
          </Btn>
        </div>
        <div className="mx-[5px] mt-[8px] mb-[10px] h-px bg-[#4b4b4b]" />
        <Heading>Distribute Spacing:</Heading>
        <div className="h-[9px]" />
        <IconRow
          items={[
            ["Distribute vertical space", "M-1 5h4v1.300H-1zM0.300 5h1.300v10H0.300zM-1 9h4v1.300H-1zM-1 14h4v1.300H-1zM6 1.500h8v6H6zM4.500 11.500h13v5.500h-13z"],
            ["Distribute horizontal space", "M5 1.500h8v1.300H5zM5.500 0h1.300v4.500H5.500zM11 0h1.300v4.500H11zM2 5h5.500v13H2zM10.500 6h6v9h-6z"],
          ]}
        />
        <div className="h-[6px]" />
        <UseSpacing id="gapSpacing" />
      </div>
    </section>
  );
}

function Links() {
  const col = "flex h-[20px] items-center justify-center border-l border-[#7c7c7c]";
  return (
    <section aria-label="Links" className={panel + "top-[102px] left-[892px] h-[588px] w-[309px]"}>
      <PanelStrip collapse={false} />
      <div className="flex h-[30px] shrink-0 bg-[#434343]">
        <button type="button" className={tab + "w-[58px] justify-center"}>Links</button>
      </div>
      <div className="flex h-[26px] shrink-0 items-center border-b border-[#4a4a4a] pl-[5px] text-[12px] font-bold text-[#f2f2f2]">
        <span className="flex-1">Name</span>
        <span className={col + " w-[39px]"} />
        <span className={col + " w-[40px]"}>
          <Svg w={15} h={13}><path d="M7.500 1L14 12.300H1z" fill="#777" stroke="#aaa" /><path d="M7.500 5v6" stroke="#ccc" strokeWidth="1.200" /></Svg>
        </span>
        <span className={col + " w-[39px] gap-[5px] pl-[8px] text-[#c8c8c8]"}>
          <Svg w={12} h={13} stroke><path d="M1 1h7l3 3v8H1zM8 1v3h3" /></Svg>
          <Svg w={6} h={3}><path d="M3 0l3 3H0z" /></Svg>
        </span>
        <span className={col + " w-[20px]"} />
      </div>
      <div className="h-[235px] shrink-0 border-b border-[#4d4d4d]" />
      <div className="flex h-[35px] shrink-0 items-center border-b-2 border-[#626262] pr-[26px] pl-[8px] text-[12px] text-[#e8e8e8]">
        <Chevron className="mr-[9px] text-[#aaa]" />
        0 Links
        <div className="ml-auto flex items-center gap-[14px] text-[#8a8a8a]">
          <Btn label="Relink from CC Libraries"><Svg w={20} h={14} stroke><path d="M7 6V1h10v12h-5M10 4h4v4M15 3v5l1.500-1 1.500 1" /><path d="M3.500 8.500h-1a2 2 0 0 0 0 4h1M8 8.500h1a2 2 0 0 1 0 4H8M4 10.500h4" /></Svg></Btn>
          <Btn label="Relink"><Link2 size={17} strokeWidth={2.6} /></Btn>
          <Btn label="Go to link"><Svg w={17} h={13} stroke><path d="M6 4.500V1h6.500L16 4.500V12H6V9.500M12 1v4h4" /><path d="M0 7h6" strokeWidth="2" /><path d="M5.500 3.500L9.500 7l-4 3.500z" fill="currentColor" stroke="none" /></Svg></Btn>
          <Btn label="Update link"><RefreshCw size={14} strokeWidth={2.4} /></Btn>
          <Btn label="Edit original" className="ml-[3px]"><Svg w={12} h={13}><path d="M0 12.500L1.500 8 8.500 1 12 4 4.500 11.500z" /></Svg></Btn>
        </div>
      </div>
      <div className="flex h-[30px] shrink-0 items-center border-b border-[#484848] pr-[16px] pl-[5px] text-[12px] font-bold text-[#f2f2f2]">
        Link Info
        <div className="ml-auto flex gap-[20px] text-[#8a8a8a]">
          <Btn label="Previous link"><Svg w={5} h={9}><path d="M5 0v9L0 4.500z" /></Svg></Btn>
          <Btn label="Next link"><Svg w={5} h={9}><path d="M0 0v9l5-4.500z" /></Svg></Btn>
        </div>
      </div>
      <div className="flex-1" />
      <PanelFoot />
    </section>
  );
}

function DragArrow() {
  return (
    <div className="absolute top-[68px] left-[1132px] flex h-[90px] w-[271px] items-center">
      <svg className="absolute inset-0" width="271" height="90" aria-hidden="true">
        <path d="M3 22.500L204 18l-3-14.500L267 45l-66 41.500L204 71 3 67z" fill="#fdb900" stroke="#fdb900" strokeWidth="5" strokeLinejoin="round" />
      </svg>
      <span className="relative ml-[77px] font-['Liberation_Sans',sans-serif] text-[21px] text-[#1a1000]">Drag</span>
    </div>
  );
}

/* ---------- document ---------- */

function StatusBar() {
  return (
    <footer className="flex h-[17px] shrink-0 items-center border-b border-[#3a3a3a] bg-[#4a4a4a] text-[12px] leading-4 text-[#ececec]">
      <div className="flex h-full w-[563px] shrink-0 items-center overflow-hidden bg-[#535353] whitespace-nowrap">
        <button type="button" className="ml-[15px] flex w-[56px] items-center justify-between">60% <Chevron /></button>
        <Btn label="First page" className="ml-[13px] text-[#858585]"><Svg w={9} h={9}><path d="M0 0h1.500v9H0zM8 0v9L3 4.500z" /></Svg></Btn>
        <Btn label="Previous page" className="ml-[16px] text-[#858585]"><Svg w={5} h={9}><path d="M5 0v9L0 4.500z" /></Svg></Btn>
        <div className="ml-[14px] flex h-full w-[98px] items-center border border-[#3f3f3f] bg-[#454545]">
          <input aria-label="Page" defaultValue="1" className="min-w-0 flex-1 bg-transparent pl-[4px] outline-none" />
          <Btn label="Page list" className="h-full w-[19px] border-l border-[#5c5c5c]"><Chevron /></Btn>
        </div>
        <Btn label="Next page" className="ml-[14px] text-[#858585]"><Svg w={5} h={9}><path d="M0 0v9l5-4.500z" /></Svg></Btn>
        <Btn label="Last page" className="ml-[16px] text-[#858585]"><Svg w={9} h={9}><path d="M1 0v9l5-4.500zM7 0h1.500v9H7z" /></Svg></Btn>
        <Btn label="Open" className="ml-[19px] text-[#b4b4b4]"><Svg w={18} h={14} stroke><path d="M3.500 12A6 6 0 1 1 13 10.500" strokeWidth="1.800" /><path d="M8 4c3 2 4 4 4.500 8" strokeWidth="2" /><path d="M15.500 11.500h2" strokeWidth="2" /></Svg></Btn>
        <button type="button" className="ml-[18px] flex w-[121px] items-center justify-between">[Basic] (working) <Chevron /></button>
        <span className="ml-[17px] size-[11px] rounded-full bg-[#12a012]" />
        <button type="button" className="ml-[6px] flex w-[78px] items-center justify-between">No errors <Chevron className="text-[#9a9a9a]" /></button>
      </div>
      <div className="flex h-full flex-1 items-center pl-[267px]">
        <div className="h-[14px] w-[527px] rounded-full bg-[#6a6a6a]" />
      </div>
      <Btn label="Split layout view" className="mr-[19px] text-[#a8a8a8]"><Svg w={17} h={12} stroke><path d="M1 1h15v10H1zM8.500 1v10" /></Svg></Btn>
    </footer>
  );
}

function Document() {
  return (
    <main className="flex min-w-0 flex-1 flex-col bg-[#424242]">
      <div className="flex h-8 shrink-0 border-b-2 border-[#3a3a3a] pl-px">
        <div className="flex w-[229px] items-center bg-[#535353] pl-[16px] text-[#f2f2f2]">
          <Btn label="Close document"><Svg w={8} h={8} stroke><path d="M0.500 0.500l7 7M7.500 0.500l-7 7" strokeWidth="1.200" /></Svg></Btn>
          <span className="ml-[9px] text-[12px] font-semibold whitespace-nowrap">Untitled-1 @ 60% [GPU Preview]</span>
        </div>
      </div>
      <div className="flex min-h-0 flex-1">
        <div className="flex min-w-0 flex-1 flex-col">
          <div className="flex h-[18px] shrink-0">
            <svg width="17" height="18" className="block shrink-0 bg-[#1e1e1e]" aria-hidden="true">
              <path d="M5.500 0v18M0 5.500h17" stroke="#8a8a8a" strokeDasharray="1 2" />
              <path d="M16.500 0v18" stroke="#8a8a8a" />
            </svg>
            <TopRuler />
          </div>
          <div className="flex min-h-0 flex-1 overflow-hidden">
            <SideRuler />
            <div className="relative min-w-0 flex-1 overflow-hidden border-b border-[#8a8a8a] bg-[#5e5e5e]">
              <div className="absolute top-[7px] left-[424px] h-[738px] w-[570px] border-r border-b-2 border-black bg-white">
                <div className="absolute top-[33px] left-[34px] h-[670px] w-[502px] border border-[#bd68c4]" />
              </div>
            </div>
          </div>
        </div>
        <div className="w-[16px] shrink-0 bg-[#4a4a4a] pt-[80px]">
          <div className="mx-px h-[608px] rounded-full bg-[#6a6a6a]" />
        </div>
      </div>
      <StatusBar />
    </main>
  );
}

/* ---------- dock ---------- */

const wrapIcon = <Svg w={19} h={16}><path d="M0 0.500h19V2H0zM0 4h5v1.300H0zM14 4h5v1.300h-5zM0 7.300h4v1.300H0zM15 7.300h4v1.300h-4zM0 10.600h5v1.300H0zM14 10.600h5v1.300h-5zM0 14h19v1.500H0z" /><circle cx="9.500" cy="8" r="4.800" /></Svg>;

const MiniSquares = () => <path d="M0.700 9.200h5v5h-5zM6.500 11.500h3v5.500h-5v-2" fill="none" stroke="currentColor" strokeWidth="1.500" />;

const DOCK = [
  [
    ["Pages", <Svg w={19} h={20}><path d="M8.500 3v14H0V8h4.500V3zM3.500 4v3H0.500zM10.500 3v14H19V8h-4.500V3zM15.500 4v3h3z" /><path d="M9 0h1v20H9z" /></Svg>],
    ["Layers", <Svg w={18} h={18}><path d="M9 0l9 5.500L9 11 0 5.500z" /><path d="M0 11l2.500-1.500L9 13.500l6.500-4L18 11 9 17.500z" /></Svg>],
    ["Swatches", <Svg w={18} h={13}><path d="M0.500 0.500h17v12H0.500zM0.500 6.500h17M6.500 0.500v12M12 0.500v12" fill="#777" stroke="currentColor" strokeWidth="1.200" /><path d="M7 1h5v5H7z" /></Svg>],
    ["CC Libraries", <Svg w={18} h={18} stroke><path d="M3.500 3h13v13.500h-13zM3 14H1.500V1.500H14V3" strokeWidth="1.500" /><path d="M9.500 3v7l2.500-2 2.500 2V3z" fill="currentColor" stroke="none" /></Svg>],
  ],
  [
    ["Glyphs", <Svg w={18} h={18} stroke><path d="M1.500 6C1 3 4 1 8 1h5l-1.500 12c-.2 2 .5 3 2 3h2M12.500 1C9 6 7 16 2.500 16.500 1 16.500 1 15 1.500 14.500M6 10.500h6" strokeWidth="1.500" /></Svg>],
    ["Text Wrap", wrapIcon],
  ],
  [
    ["Stroke", <Svg w={19} h={14}><path d="M0 0h19v1.500H0zM0 5h19v2.500H0zM0 10.500h19v3.500H0z" /></Svg>],
    ["Gradient", <GradientIcon w={19} h={13} id="gd" />],
  ],
  [
    ["Story", <Svg w={17} h={19}><path d="M0 0h17v19H0z" /><path d="M3.500 5V4h6v1M6.500 4v5M5 9h3M10 8.500h4M3.500 12h10M3.500 15h10" fill="none" stroke="#535353" strokeWidth="1.300" /></Svg>],
    ["Hyperlinks", <Svg w={20} h={19}><path d="M7 0.500a6.500 6.500 0 0 0-2 12.500l2-3-3-3 1-3 3-1zM9 0.500c2 .3 4 2 4.500 5l-2 2-3-1 1-2z" /><path d="M12 7.500c1 0 1.300.7 1.300 1.500v3l5 1.200c1 .3 1.500 1 1.200 2L18.500 19h-5l-3.500-4 1-1V9c0-.8.300-1.500 1-1.500z" /></Svg>],
    ["Effects", <span className="text-[18px] leading-5 italic">fx</span>],
  ],
  [
    ["Paragraph", <Svg w={16} h={17}><path d="M6 0h8v1.200h-1V17h-1.500V1.200H9.500V17H8V9H6A4.500 4.500 0 0 1 6 0z" /></Svg>],
    ["Paragraph Styles", <Svg w={19} h={18}><path d="M10.500 0H18v1h-1v13h-1.200V1h-1.600v13H13V8h-2.500a4 4 0 0 1 0-8z" /><MiniSquares /></Svg>],
  ],
  [
    ["Character", <span className="flex items-center gap-px text-[19px] leading-5">A<i className="h-[19px] w-px bg-current" /></span>],
    ["Character Styles", <span className="relative block h-[19px] w-[19px] text-right text-[17px] leading-4">A<svg className="absolute inset-0" width="19" height="19" aria-hidden="true"><MiniSquares /></svg></span>],
  ],
];

function Dock() {
  return (
    <aside className="flex w-[183px] shrink-0 flex-col border-l-2 border-[#3c3c3c] bg-[#535353] text-[#c4c4c4]">
      <div className="flex h-[13px] shrink-0 items-center justify-end border-b border-[#3a3a3a] bg-[#434343] pr-2"><Collapse /></div>
      {DOCK.map((g, i) => (
        <section key={i} className="flex flex-col border-b border-[#3c3c3c] pt-1">
          <Grip className="mb-[3px] ml-[78px]" />
          {g.map(([name, icon]) => (
            <button key={name} type="button" className="flex h-[31px] items-center pl-[11px] text-[13px] font-bold text-[#f2f2f2]">
              <span className="flex w-[20px] items-center justify-center font-normal text-[#c4c4c4]">{icon}</span>
              <span className="ml-[9px]">{name}</span>
            </button>
          ))}
        </section>
      ))}
    </aside>
  );
}

export default function App() {
  return (
    <div className="flex h-screen flex-col overflow-hidden bg-[#1c5f7a] font-['Open_Sans','Noto_Sans',sans-serif]">
      <MenuBar />
      <TitleBar />
      <ControlBar />
      <div className="relative flex min-h-0 flex-1">
        <Toolbox />
        <Document />
        <Dock />
        <div className="absolute top-[50px] left-[62px] size-0">
          <ObjectStyles />
          <Align />
          <Links />
          <DragArrow />
        </div>
      </div>
    </div>
  );
}
